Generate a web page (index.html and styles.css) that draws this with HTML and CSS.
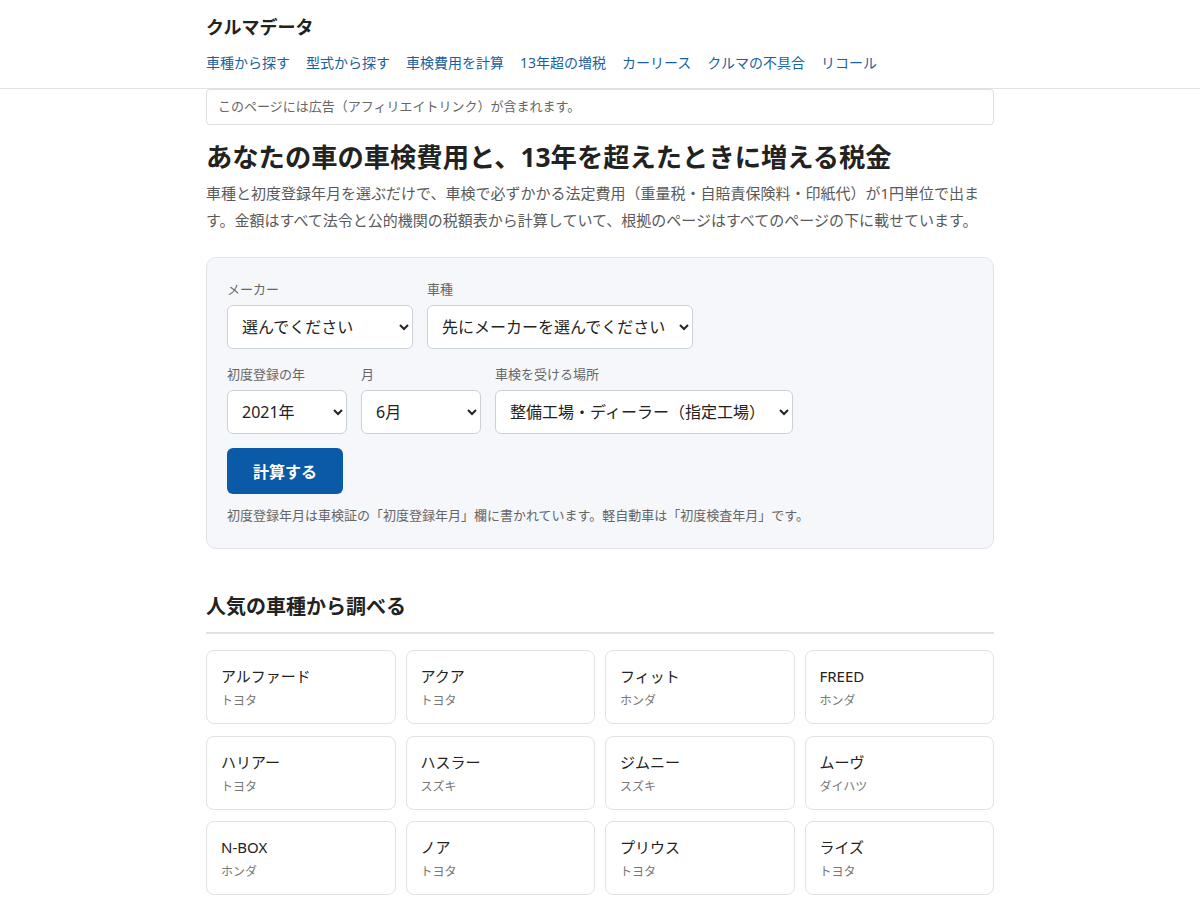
FILE: index.html
```html
<!DOCTYPE html>
<html lang="ja">
<head>
<meta charset="utf-8">
<title>クルマデータ</title>
<link rel="stylesheet" href="styles.css">
</head>
<body>
<header class="site-header">
  <div class="wrap">
    <div class="logo">クルマデータ</div>
    <nav class="nav">
      <a href="#">車種から探す</a>
      <a href="#">型式から探す</a>
      <a href="#">車検費用を計算</a>
      <a href="#">13年超の増税</a>
      <a href="#">カーリース</a>
      <a href="#">クルマの不具合</a>
      <a href="#">リコール</a>
    </nav>
  </div>
</header>
<main class="wrap">
  <div class="notice">このページには広告（アフィリエイトリンク）が含まれます。</div>
  <h1 class="title">あなたの車の車検費用と、13年を超えたときに増える税金</h1>
  <p class="lead">車種と初度登録年月を選ぶだけで、車検で必ずかかる法定費用（重量税・自賠責保険料・印紙代）が1円単位で出ます。金額はすべて法令と公的機関の税額表から計算していて、根拠のページはすべてのページの下に載せています。</p>

  <form class="calc">
    <div class="row">
      <label class="field">
        <span class="lbl">メーカー</span>
        <select class="sel w-maker"><option>選んでください</option></select>
      </label>
      <label class="field">
        <span class="lbl">車種</span>
        <select class="sel w-model"><option>先にメーカーを選んでください</option></select>
      </label>
    </div>
    <div class="row">
      <label class="field">
        <span class="lbl">初度登録の年</span>
        <select class="sel w-year"><option>2021年</option></select>
      </label>
      <label class="field">
        <span class="lbl">月</span>
        <select class="sel w-month"><option>6月</option></select>
      </label>
      <label class="field">
        <span class="lbl">車検を受ける場所</span>
        <select class="sel w-place"><option>整備工場・ディーラー（指定工場）</option></select>
      </label>
    </div>
    <button type="button" class="btn">計算する</button>
    <p class="note">初度登録年月は車検証の「初度登録年月」欄に書かれています。軽自動車は「初度検査年月」です。</p>
  </form>

  <h2 class="sec">人気の車種から調べる</h2>
  <div class="cards">
    <a class="card" href="#"><span class="name">アルファード</span><span class="maker">トヨタ</span></a>
    <a class="card" href="#"><span class="name">アクア</span><span class="maker">トヨタ</span></a>
    <a class="card" href="#"><span class="name">フィット</span><span class="maker">ホンダ</span></a>
    <a class="card" href="#"><span class="name">FREED</span><span class="maker">ホンダ</span></a>
    <a class="card" href="#"><span class="name">ハリアー</span><span class="maker">トヨタ</span></a>
    <a class="card" href="#"><span class="name">ハスラー</span><span class="maker">スズキ</span></a>
    <a class="card" href="#"><span class="name">ジムニー</span><span class="maker">スズキ</span></a>
    <a class="card" href="#"><span class="name">ムーヴ</span><span class="maker">ダイハツ</span></a>
    <a class="card" href="#"><span class="name">N-BOX</span><span class="maker">ホンダ</span></a>
    <a class="card" href="#"><span class="name">ノア</span><span class="maker">トヨタ</span></a>
    <a class="card" href="#"><span class="name">プリウス</span><span class="maker">トヨタ</span></a>
    <a class="card" href="#"><span class="name">ライズ</span><span class="maker">トヨタ</span></a>
  </div>
</main>
</body>
</html>
```
FILE: styles.css
```css
* { box-sizing: border-box; }
html, body { margin: 0; padding: 0; }
body {
  font-family: "Noto Sans", "Noto Sans CJK JP", sans-serif;
  color: #222;
  background: #fff;
}
.wrap { width: 788px; margin: 0 auto; }
.site-header { border-bottom: 1px solid #e2e2e2; }
.site-header .wrap { padding-top: 14px; padding-bottom: 13px; }
.logo { font-size: 18px; font-weight: 700; line-height: 26px; color: #222; }
.nav { display: flex; gap: 16px; margin-top: 11px; }
.nav a { font-size: 14px; line-height: 24px; color: #1a5fa0; text-decoration: none; }

.notice {
  border: 1px solid #e0e0e0;
  border-radius: 4px;
  padding: 6px 11px 7px;
  font-size: 13px;
  line-height: 21px;
  color: #666;
}
.title { font-size: 26.3px; font-weight: 700; line-height: 36px; margin: 14px 0 5px; color: #222; }
.lead { font-size: 15px; line-height: 27px; color: #5a5a5a; margin: 0 0 23px; }

.calc {
  background: #f5f7fa;
  border: 1px solid #dfe3e8;
  border-radius: 10px;
  padding: 22px 20px 23px;
  margin: 0 0 43px;
}
.row { display: flex; gap: 14px; margin-bottom: 16px; }
.row + .row { margin-bottom: 14px; }
.field { display: flex; flex-direction: column; }
.lbl { font-size: 13px; line-height: 18px; color: #666; margin-bottom: 7px; }
.sel {
  height: 44px;
  font-family: "Noto Sans", "Noto Sans CJK JP", sans-serif;
  font-size: 16px;
  color: #222;
  background: #fff;
  border: 1px solid #ccd1d8;
  border-radius: 6px;
  padding: 0 8px 0 10px;
}
.w-maker { width: 186px; }
.w-model { width: 266px; }
.w-year { width: 120px; }
.w-month { width: 120px; }
.w-place { width: 298px; }
.btn {
  display: block;
  width: 116px;
  height: 46px;
  border: 0;
  border-radius: 6px;
  background: #0b5aa8;
  color: #fff;
  font-family: "Noto Sans", "Noto Sans CJK JP", sans-serif;
  font-size: 16px;
  font-weight: 700;
}
.note { font-size: 13px; line-height: 20px; color: #666; margin: 11px 0 0; }

.sec {
  font-size: 20px;
  font-weight: 700;
  line-height: 30px;
  margin: 0 0 16px;
  padding-bottom: 10px;
  border-bottom: 2px solid #e2e2e2;
}
.cards { display: grid; grid-template-columns: repeat(4, 1fr); gap: 11.5px 10px; }
.card {
  display: flex;
  flex-direction: column;
  border: 1px solid #e2e2e2;
  border-radius: 8px;
  padding: 14px;
  height: 74px;
  text-decoration: none;
  color: #222;
}
.name { font-size: 15px; line-height: 22px; color: #222; }
.maker { font-size: 12px; line-height: 18px; color: #777; margin-top: 5px; }
```
